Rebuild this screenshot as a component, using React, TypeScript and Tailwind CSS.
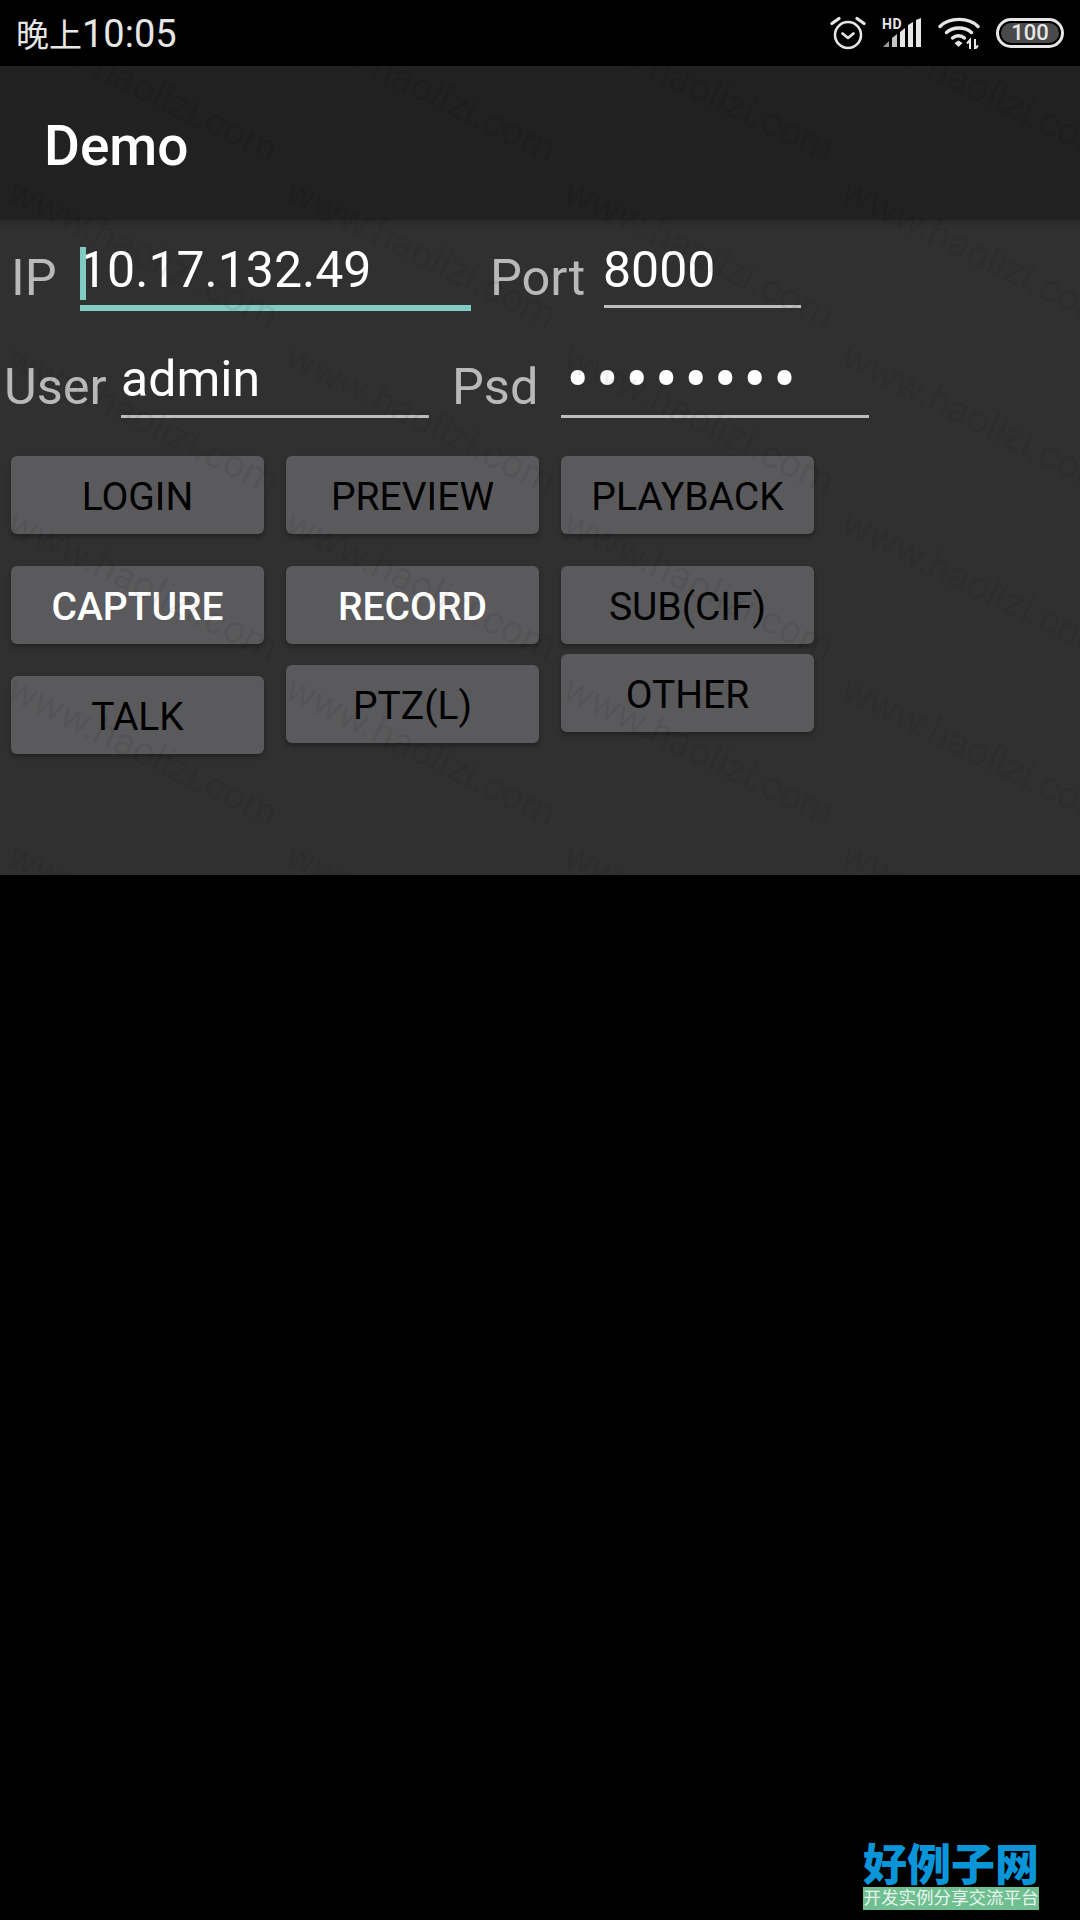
import React from 'react';

const marks: { x: number; y: number }[] = [];
for (let row = 0; row < 6; row++) {
  for (let col = 0; col < 5; col++) {
    marks.push({ x: 9.5 + col * 278, y: -63.5 + row * 166 });
  }
}

function Label({ text, className }: { text: string; className: string }) {
  return <span className={`text-[50.5px] leading-[58px] text-[#b9b9b9] ${className}`}>{text}</span>;
}

function Btn({ text, light, className = '' }: { text: string; light?: boolean; className?: string }) {
  return (
    <button className={`flex h-[78px] w-[253px] items-center justify-center rounded-[6px] bg-[#5a5a5c] pt-[4px] text-[39px] shadow-[0_3px_5px_rgba(0,0,0,0.3)] ${light ? 'font-medium text-white' : 'text-black'} ${className}`}>
      {text}
    </button>
  );
}

function StatusIcons() {
  return (
    <div className="flex items-center">
      {/* alarm */}
      <svg width="36" height="36" viewBox="0 0 36 36" className="mr-[16px]" fill="none" stroke="#e6e6e6" strokeWidth="2.6" strokeLinecap="round" strokeLinejoin="round">
        <circle cx="18" cy="20" r="13" />
        <path d="M12.500 18.500 18 23l5.500-4.500" />
        <path d="M2 8.500 9 3.500" strokeWidth="3.2" />
        <path d="M34 8.500 27 3.500" strokeWidth="3.2" />
      </svg>
      {/* hd + signal */}
      <div className="relative mr-[16px] h-[30px] w-[40px]">
        <span className="absolute left-0 top-[-1px] text-[14px] font-bold leading-[14px] tracking-[0.5px] text-[#e6e6e6]">HD</span>
        <svg width="40" height="30" viewBox="0 0 40 30" fill="#e6e6e6" className="absolute left-0 top-0">
          <path d="M1 29 7 23V29Z" fill="#9a9a9a" />
          <path d="M10 29V20l5-4v13Z" fill="#c4c4c4" />
          <path d="M18 29V14l5-4v19Z" />
          <path d="M26 29V7l5-3v25Z" />
          <path d="M34 29V2l5-2V29Z" />
        </svg>
      </div>
      {/* wifi */}
      <svg width="42" height="32" viewBox="0 0 42 32" className="mr-[16px]" fill="none" stroke="#e6e6e6" strokeWidth="3.4" strokeLinecap="round">
        <path d="M2 9.500C11 0 31 0 40 9.500" />
        <path d="M8.500 15.500C15 9.500 27 9.500 33.500 15.500" />
        <path d="M14.500 21C18 18 23 18 26.500 21" />
        <path d="M16.500 26 20.500 23.500 24.500 26 20.500 30Z" fill="#e6e6e6" stroke="none" />
        <path d="M32 32V23l-3 3.500" strokeWidth="2" strokeLinecap="butt" />
        <path d="M37 22v10l3-3.500" strokeWidth="2" strokeLinecap="butt" />
      </svg>
      {/* battery */}
      <div className="flex h-[30px] w-[68px] items-center justify-center rounded-full border-[3px] border-[#e6e6e6] p-[2px]">
        <span className="flex h-full w-full items-center justify-center rounded-full bg-[#4a4a4a] text-[22px] font-medium leading-none text-[#e6e6e6]">100</span>
      </div>
    </div>
  );
}

export default function App() {
  return (
    <div className="flex h-[1920px] w-[1080px] flex-col overflow-hidden bg-black font-['Roboto','Noto_Sans_CJK_SC',sans-serif]">
      <div className="flex h-[66px] items-center justify-between px-[16px]">
        <span className="mt-[2px] text-[38px] leading-none text-[#e6e6e6]"><span className="text-[33px]">晚上</span>10:05</span>
        <StatusIcons />
      </div>

      <div className="relative h-[809px] overflow-hidden bg-[#303030]">
        <div className="relative z-10 flex h-[154px] items-center bg-[#212121] pl-[44px] pt-[7px] shadow-[0_3px_6px_rgba(0,0,0,0.2)]">
          <h1 className="text-[55px] font-medium leading-none text-white">Demo</h1>
        </div>

        {/* ip / port */}
        <div className="flex pt-[21px]">
          <Label text="IP" className="ml-[11px] mt-[8px] w-[69px]" />
          <div className="relative w-[391px]">
            <div className="-ml-[1px] h-[58px] text-[50px] leading-[58px] text-white">10.17.132.49</div>
            <div className="mt-[6px] h-[6px] bg-[#80cbc4]" />
            <div className="absolute left-0 top-[6px] h-[53px] w-[6px] bg-[#80cbc4]" />
          </div>
          <Label text="Port" className="ml-[19px] mt-[8px] w-[114px]" />
          <div className="w-[197px]">
            <div className="-ml-[1px] h-[58px] text-[50px] leading-[58px] text-white">8000</div>
            <div className="mt-[6px] h-[3px] bg-[#bdbdbd]" />
          </div>
        </div>

        {/* user / psd */}
        <div className="flex pt-[39px]">
          <Label text="User" className="ml-[4px] mt-[8px] w-[117px]" />
          <div className="w-[308px]">
            <div className="h-[58px] text-[50px] leading-[58px] text-white">admin</div>
            <div className="mt-[7px] h-[3px] bg-[#bdbdbd]" />
          </div>
          <Label text="Psd" className="ml-[23px] mt-[8px] w-[109px]" />
          <div className="w-[308px]">
            <div className="h-[58px] whitespace-nowrap pl-[5px] text-[70px] leading-[58px] tracking-[5.900px] text-white">••••••••</div>
            <div className="mt-[7px] h-[3px] bg-[#bdbdbd]" />
          </div>
        </div>

        <div className="mt-[38px] flex gap-[22px] pl-[11px]">
          <div className="flex flex-col">
            <Btn text="LOGIN" />
            <Btn text="CAPTURE" light className="mt-[32px]" />
            <Btn text="TALK" className="mt-[32px]" />
          </div>
          <div className="flex flex-col">
            <Btn text="PREVIEW" />
            <Btn text="RECORD" light className="mt-[32px]" />
            <Btn text="PTZ(L)" className="mt-[21px]" />
          </div>
          <div className="flex flex-col">
            <Btn text="PLAYBACK" />
            <Btn text="SUB(CIF)" className="mt-[32px]" />
            <Btn text="OTHER" className="mt-[10px]" />
          </div>
        </div>

        {/* watermark over everything */}
        <div className="pointer-events-none absolute inset-0 z-20">
          {marks.map((m, i) => (
            <span
              key={i}
              className="absolute origin-left rotate-[26deg] whitespace-nowrap text-[39px] leading-none text-black/[0.07]"
              style={{ left: m.x, top: m.y }}
            >
              www.haolizi.com
            </span>
          ))}
        </div>
      </div>

      <div className="flex flex-1 items-end justify-end pb-[10px] pr-[41px]">
        <div className="flex w-[176px] flex-col items-center">
          <span className="text-[44px] font-black leading-[42px] text-[#0b95d9]">好例子网</span>
          <span className="flex h-[23px] w-full items-center justify-center bg-[#6fbf90] text-[17.500px] leading-none text-[#e8f5ee]">开发实例分享交流平台</span>
        </div>
      </div>
    </div>
  );
}
